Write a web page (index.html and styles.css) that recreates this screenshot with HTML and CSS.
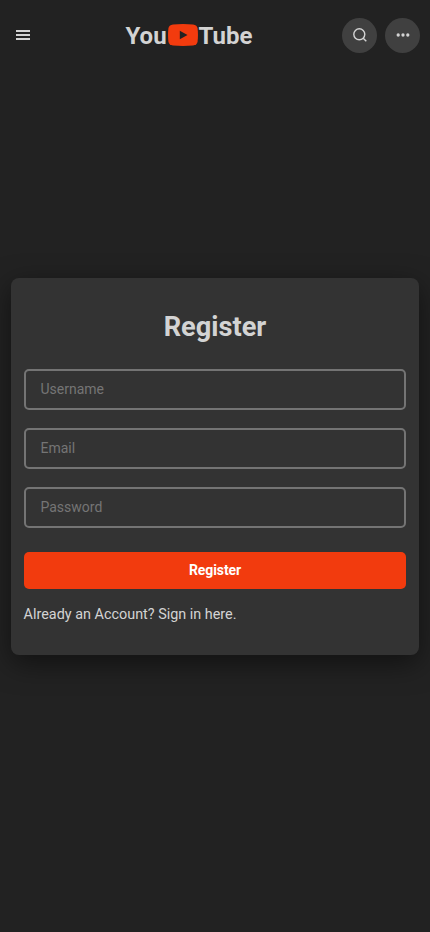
FILE: index.html
```html
<!DOCTYPE html>
<html lang="en">
<head>
<meta charset="utf-8">
<meta name="viewport" content="width=device-width, initial-scale=1">
<title>Register</title>
<link rel="stylesheet" href="styles.css">
</head>
<body>
<header class="header">
  <button class="menu" aria-label="Menu"><span></span><span></span><span></span></button>
  <a class="logo"><span class="word">You</span><svg class="logo-mark" viewBox="0 0 30 22"><path class="logo-box" d="M5 .5Q15-.4 25 .5Q29.200 .9 29.600 4.500Q30.300 11 29.600 17.500Q29.200 21.100 25 21.500Q15 22.400 5 21.500Q.8 21.100 .4 17.500Q-.3 11 .4 4.500Q.8 .9 5 .5Z"/><path class="logo-play" d="M11.800 6.800L19.500 11L11.800 15.200Z"/></svg><span class="word">Tube</span></a>
  <div class="actions">
    <button class="round" aria-label="Search"><svg viewBox="0 0 16 16"><circle class="line" cx="7.300" cy="7.300" r="5.500"/><path class="line" d="M11.200 11.200L14.300 14.300"/></svg></button>
    <button class="round" aria-label="More"><svg viewBox="0 0 16 16"><circle cx="3.200" cy="8" r="1.650"/><circle cx="8" cy="8" r="1.650"/><circle cx="12.800" cy="8" r="1.650"/></svg></button>
  </div>
</header>
<main class="page">
  <form class="card">
    <h1 class="title">Register</h1>
    <input class="field" type="text" placeholder="Username">
    <input class="field" type="email" placeholder="Email">
    <input class="field" type="password" placeholder="Password">
    <button class="submit" type="button">Register</button>
    <a class="signin">Already an Account? Sign in here.</a>
  </form>
</main>
</body>
</html>
```
FILE: styles.css
```css
* {
  box-sizing: border-box;
}

body {
  margin: 0;
  height: 100vh;
  display: flex;
  flex-direction: column;
  overflow: hidden;
  background: #222;
  color: #d3d3d3;
  font-family: Roboto, sans-serif;
}

button {
  padding: 0;
  border: 0;
  background: none;
  font-family: inherit;
}

.header {
  height: 70px;
  flex: none;
  display: flex;
  align-items: center;
  justify-content: space-between;
  padding: 0 10px 0 16px;
}

.menu {
  width: 14px;
  display: flex;
  flex-direction: column;
  gap: 2px;
}

.menu span {
  height: 2px;
  background: #d3d3d3;
}

.logo {
  display: flex;
  align-items: center;
  margin-left: 6px;
  font-size: 24px;
  line-height: 28px;
  font-weight: 700;
}

.word {
  padding-top: 2px;
}

.logo-mark {
  width: 30px;
  height: 22px;
  margin: 0 1px;
}

.logo-box {
  fill: #f23b0e;
}

.logo-play {
  fill: #222;
}

.actions {
  display: flex;
  gap: 8px;
}

.round {
  width: 35px;
  height: 35px;
  display: flex;
  align-items: center;
  justify-content: center;
  border-radius: 50%;
  background: #404040;
}

.round svg {
  width: 16px;
  height: 16px;
  fill: #d3d3d3;
}

.round .line {
  fill: none;
  stroke: #d3d3d3;
  stroke-width: 1.4;
}

.page {
  flex: 1;
  padding: 208px 11px 0;
}

.card {
  height: 377px;
  display: flex;
  flex-direction: column;
  padding: 33px 13px 32px;
  border-radius: 8px;
  background: #333;
  box-shadow: 0 8px 28px rgba(0, 0, 0, 0.5);
}

.title {
  margin: 0 0 25px;
  font-size: 27.2px;
  line-height: 33px;
  text-align: center;
}

.field {
  height: 41px;
  margin: 0 0 18px;
  padding: 0 14.5px 2px;
  border: 2px solid #747474;
  border-radius: 5px;
  background: transparent;
  color: #d3d3d3;
  font-family: inherit;
  font-size: 14px;
}

.field::placeholder {
  color: #757575;
}

.submit {
  height: 37px;
  margin: 6px 0 17px;
  padding-bottom: 2px;
  border-radius: 5px;
  background: #f23b0e;
  color: #fff;
  font-size: 14px;
  letter-spacing: -0.1px;
  font-weight: 700;
}

.signin {
  margin-left: -0.4px;
  font-size: 14.4px;
  line-height: 17px;
}
```
